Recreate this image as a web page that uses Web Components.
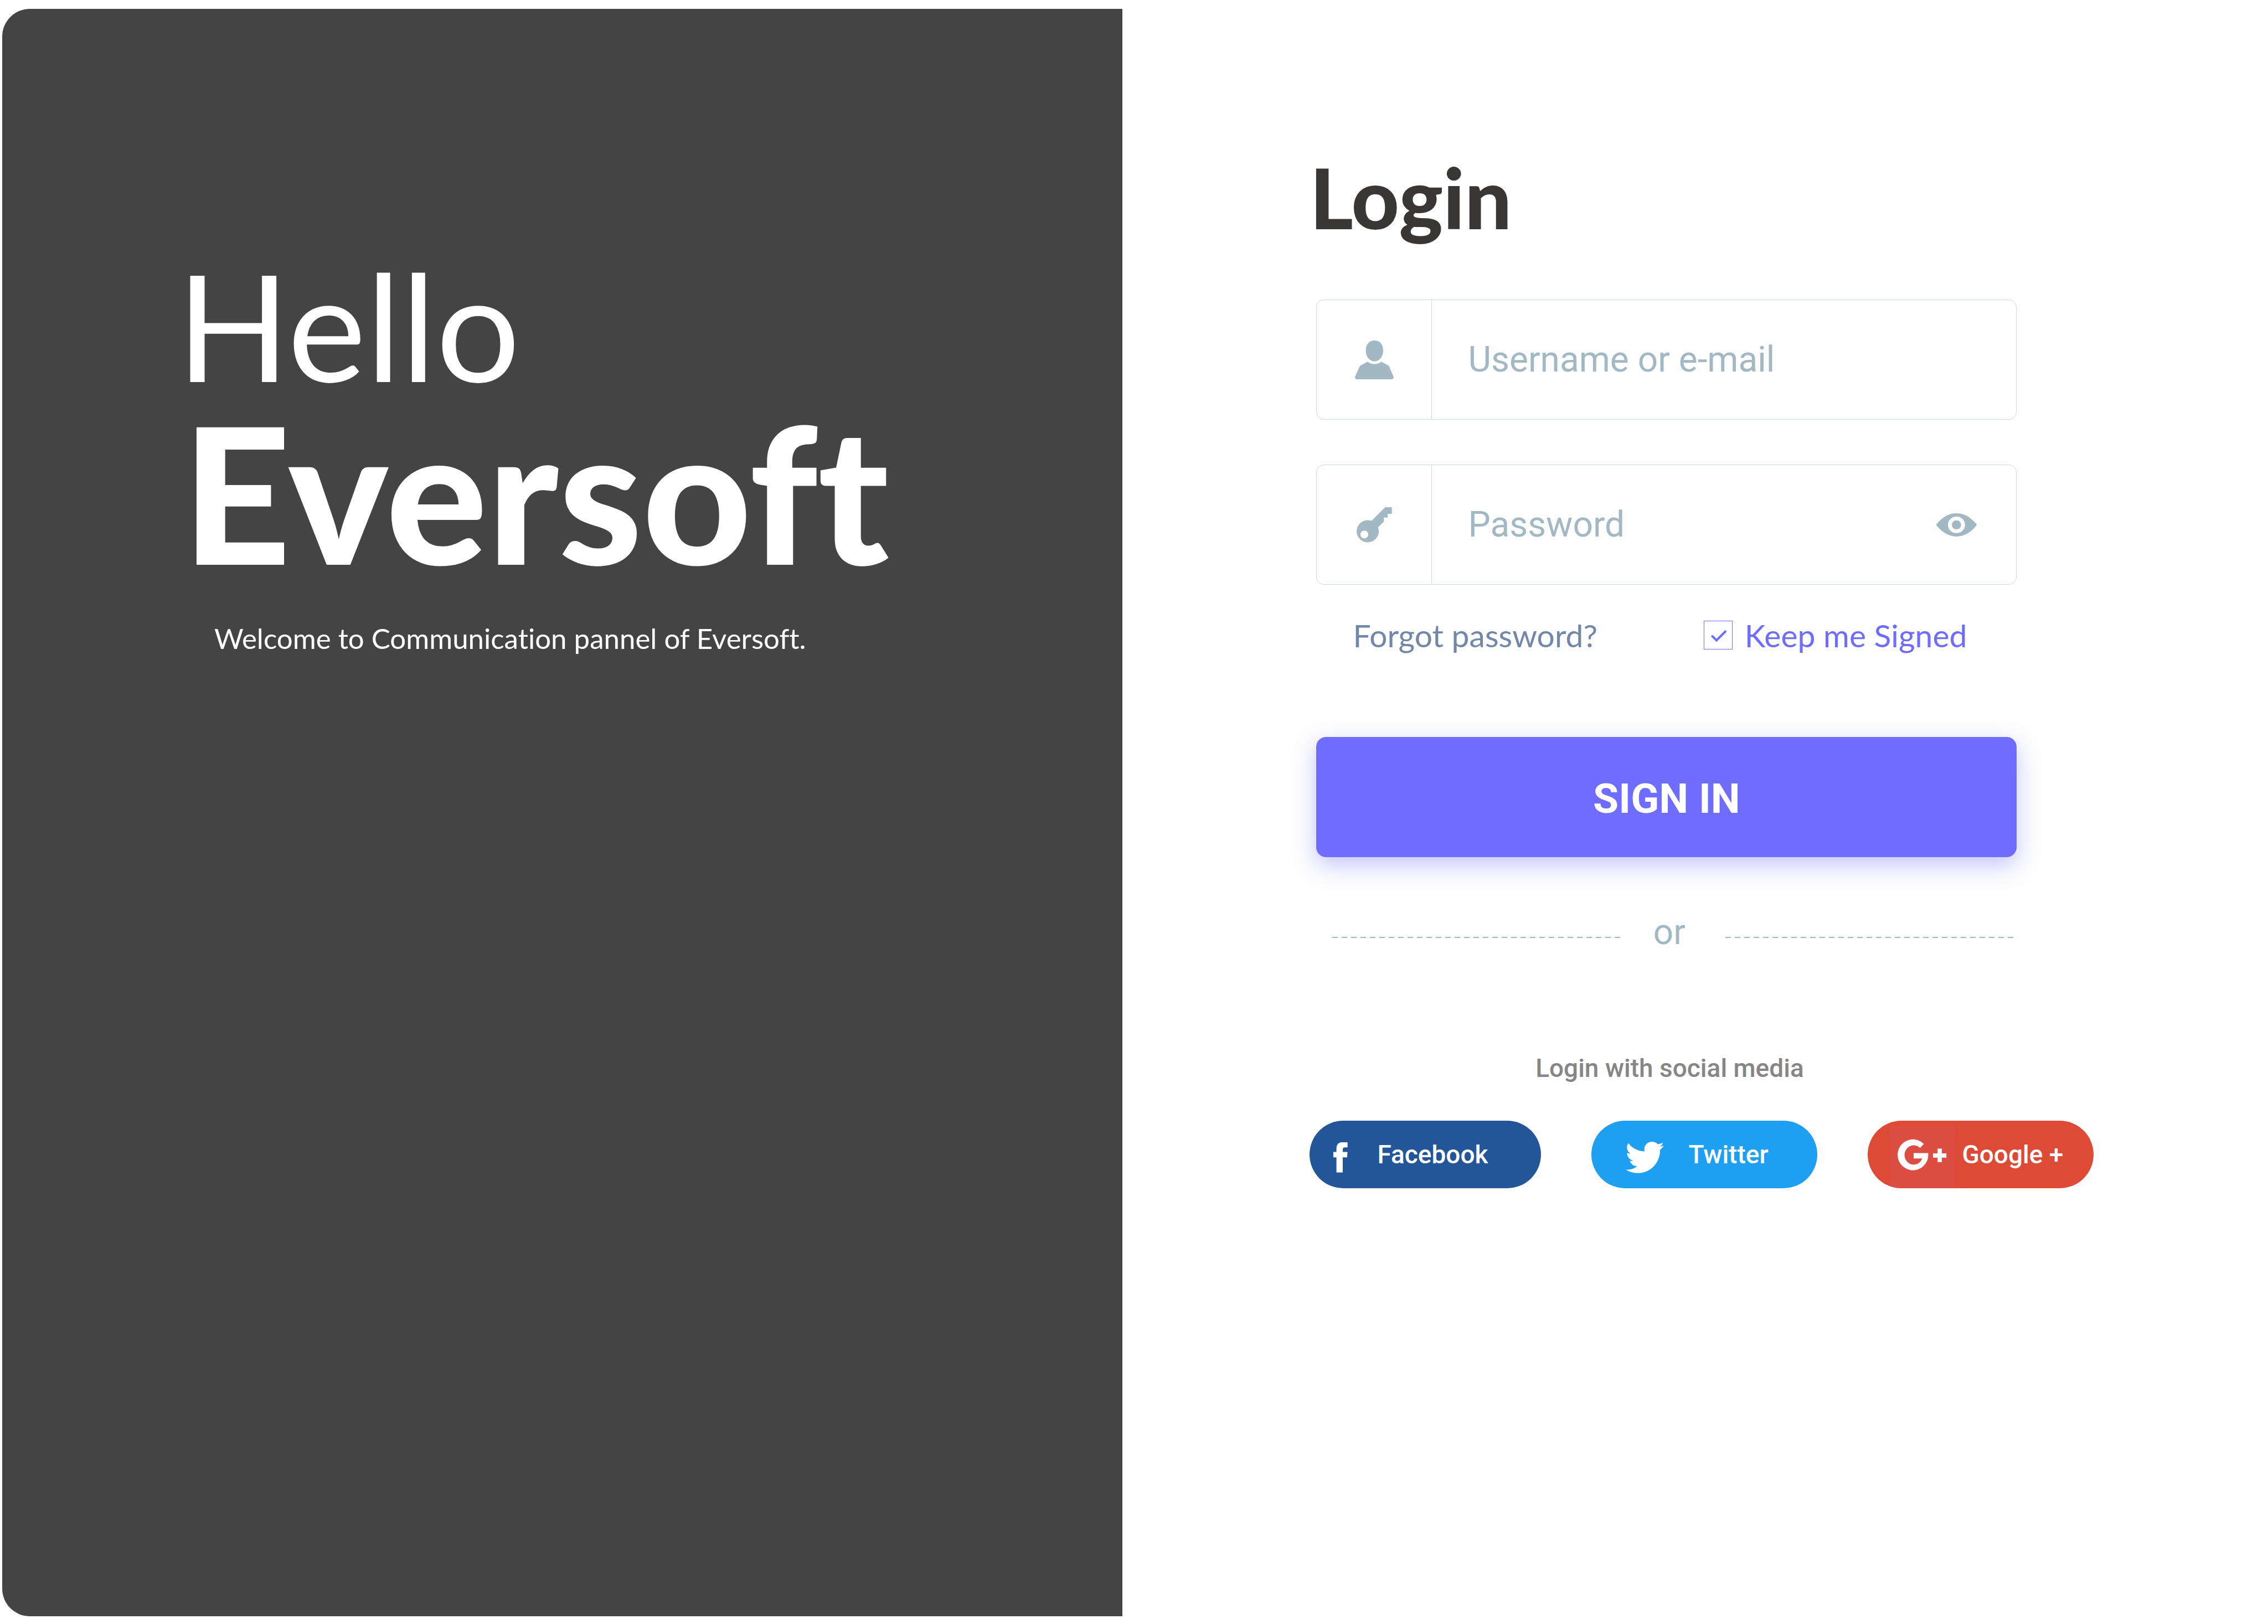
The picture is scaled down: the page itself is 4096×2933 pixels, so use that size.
<!DOCTYPE html>
<html lang="en">
<head>
<meta charset="utf-8">
<title>Eversoft login</title>
<style>
  body { margin: 0; background: #fefefe; }
</style>
</head>
<body>
<login-page>
  <welcome-panel slot="welcome">
    <span slot="greeting">Hello</span>
    <span slot="name">Eversoft</span>
    <span slot="tagline">Welcome to Communication pannel of Eversoft.</span>
  </welcome-panel>
  <login-form slot="form"></login-form>
</login-page>

<script>
const define = (name, html, setup) => {
  const template = document.createElement('template');
  template.innerHTML = html;
  customElements.define(name, class extends HTMLElement {
    connectedCallback() {
      if (this.shadowRoot) return;
      this.attachShadow({ mode: 'open' }).append(template.content.cloneNode(true));
      if (setup) setup(this, this.shadowRoot);
    }
  });
};

const icons = {
  user: `<svg width="70" height="70" viewBox="0 0 70 70" fill="currentColor"><path d="M35.3 0C45 0 51 7 51 18.500C51 29 44 37.600 35.300 37.600C26.500 37.600 19.600 29 19.600 18.500C19.600 7 25.500 0 35.300 0Z"/><path d="M23 38.200L9.800 45.200Q9.200 45.600 8.900 46.200L.5 64.800C-.7 67.500 1 70 3.800 70H66.200C69 70 70.700 67.500 69.500 64.800L61.600 46.200Q61.300 45.600 60.700 45.200L47.700 38.200C40.500 44 30.500 44 23 38.200Z"/></svg>`,
  key: `<svg width="64" height="64" viewBox="0 0 64 64" fill="currentColor"><path fill-rule="evenodd" d="M27 24.700L51.600 0H63.700V12H56.200V18.800H49.100V25.900L38.800 36.400A20 20 0 1 1 27 24.700ZM14 42.200A7.100 7.100 0 1 0 14 56.400A7.100 7.100 0 1 0 14 42.200Z"/></svg>`,
  eye: `<svg width="73" height="42" viewBox="0 0 73 42" fill="currentColor"><path fill-rule="evenodd" d="M.3 19.600C10.500 7.400 22 0 36.400 0S61.500 7 72.500 19.600Q73.200 20.900 72.500 22C61.500 35.500 49.500 41.900 36.400 41.900S10.500 34.800 .3 22Q-.3 20.900 .3 19.600ZM36.400 6A15.400 14.900 0 1 0 36.400 35.800A15.400 14.900 0 1 0 36.400 6Z"/><ellipse cx="36.400" cy="20.900" rx="8.400" ry="8.100"/></svg>`,
  facebook: `<svg width="26" height="122" viewBox="0 0 26 122" fill="#fff"><path d="M25.700 39V48.300H20.700Q17 48.300 17 51.800V56.600H25.600L24.900 66.300H17V93.500H5.600V66.300H0V56.600H5.600V50.500C5.600 43 9.500 39 15.500 39Z"/></svg>`,
  twitter: `<svg width="70" height="122" viewBox="0 0 70 122" fill="#fff"><path d="M4.600 40.600C12 50 22 55 34 55.600C32 46 38 38 47.600 38C51.500 38 55.300 39.500 58 42.500C61.300 41.900 64.500 40.900 67.300 39.400C66.300 42.800 64.400 45.300 61.500 47.100C64.200 46.800 66.800 46.100 69.100 45.100C67.200 47.900 64.900 50.300 62.100 52.400C62.800 73 47 94.600 21.800 94.600C13.800 94.600 6.300 92.300 0 88.400C7.500 89.200 15 87 20.600 82.300C14.300 82.200 9.300 78.100 7.500 72.400C9.600 72.800 11.900 72.700 13.900 72.200C7.200 70.800 2.300 65 2.300 58C4.200 59.100 6.300 59.700 8.600 59.700C2.200 55.300 .4 47.600 4.600 40.600Z"/></svg>`,
  google: `<svg width="118" height="122" viewBox="0 0 118 122" fill="#fff"><path fill="#dc4e41" d="M0 10H118V122H0Z"/><path d="M61.500 42A27.700 27.900 0 1 0 69.300 58.600H43V68.300H58.600A16.600 17.400 0 1 1 54.600 49.300Z"/><path d="M86.200 50.600H94V59H102.200V66.700H94V74.800H86.200V66.700H78V59H86.200Z"/></svg>`
};

define('login-page', `
  <style>
    :host { display: flex; min-height: 100vh; color: #fff; font-variant-ligatures: none;
            --humanist: Lato, "Noto Sans", sans-serif; --plain: Roboto, "Liberation Sans", sans-serif; }
    ::slotted(login-form) { flex: 1; min-width: 0; }
  </style>
  <slot name="welcome"></slot>
  <slot name="form"></slot>`);

define('welcome-panel', `
  <style>
    :host { display: block; box-sizing: border-box; flex: 0 0 49.400%; margin: 16px 0 14px 4px; padding: 428px 80px 80px 315px;
            background: #444; border-radius: 50px 0 0 50px; font-family: var(--humanist); }
    h1, p { margin: 0; font-weight: 400; }
    .greeting { display: block; font-size: 268px; line-height: 284px; }
    .name { display: block; padding-left: 10px; font-size: 342px; line-height: 320px; font-weight: 900; }
    p { margin-top: 75px; padding-left: 68px; font-size: 51px; line-height: 60px; }
  </style>
  <h1><span class="greeting"><slot name="greeting"></slot></span><span class="name"><slot name="name"></slot></span></h1>
  <p><slot name="tagline"></slot></p>`);

define('icon-field', `
  <style>
    :host { display: flex; box-sizing: border-box; height: 217px; border: 1px solid #cddbdf; border-radius: 14px; color: #a2b8c3; }
    label { flex: 0 0 207px; display: grid; place-items: center; border-right: 1px solid #cddbdf; }
    input { flex: 1; min-width: 0; padding: 0 65px; border: 0; outline: 0; background: none; color: inherit; font: 400 64px var(--plain); }
    input::placeholder { color: #a2b8c3; opacity: 1; }
    button { flex: none; padding: 0 71px 0 0; border: 0; background: none; color: inherit; display: grid; place-items: center; }
    svg { display: block; }
  </style>
  <label for="box"></label>
  <input id="box">`, (host, root) => {
  const input = root.querySelector('input');
  const label = root.querySelector('label');
  label.innerHTML = icons[host.getAttribute('icon')];
  label.setAttribute('aria-label', host.getAttribute('hint'));
  input.type = host.getAttribute('type');
  input.placeholder = host.getAttribute('hint');
  input.setAttribute('aria-label', host.getAttribute('hint'));
  if (input.type === 'password') {
    const toggle = document.createElement('button');
    toggle.type = 'button';
    toggle.setAttribute('aria-label', 'Show password');
    toggle.innerHTML = icons.eye;
    toggle.addEventListener('click', () => { input.type = input.type === 'password' ? 'text' : 'password'; });
    root.append(toggle);
  }
});

define('check-option', `
  <style>
    :host { display: block; color: #6f6dff; }
    label { display: flex; align-items: center; gap: 22px; }
    .box { display: grid; }
    .box > * { grid-area: 1 / 1; }
    input { appearance: none; box-sizing: border-box; width: 52px; height: 52px; margin: 0; border: 1px solid #6f6dff; }
    svg { pointer-events: none; visibility: hidden; }
    input:checked + svg { visibility: visible; }
  </style>
  <label><span class="box"><input type="checkbox" checked>
    <svg width="52" height="52" viewBox="0 0 52 52"><path d="M15.500 28L23 35.500L39 19.500" fill="none" stroke="#6f6dff" stroke-width="4" stroke-linecap="round"/></svg></span>
    <slot></slot></label>`);

define('or-divider', `
  <style>
    :host { display: flex; align-items: center; gap: 58px; padding-left: 29px; padding-right: 5px; color: #a2b8c3; font: 400 64px/76px var(--plain); }
    i { flex: 1; height: 2px; margin-top: 18px; background: repeating-linear-gradient(90deg, #a2b8c3 0 10px, transparent 10px 17px); }
    span { padding-right: 14px; }
  </style>
  <i></i><span><slot></slot></span><i></i>`);

define('social-button', `
  <style>
    :host { display: block; }
    button { display: flex; align-items: center; width: 100%; height: 122px; padding: 0 0 0 var(--inset); gap: var(--space); border: 0; border-radius: 61px;
             overflow: hidden; background: var(--brand); color: #fff; font: 500 46px/54px var(--plain); white-space: nowrap; }
    svg { display: block; flex: none; }
  </style>
  <button type="button"><slot></slot></button>`, (host, root) => {
  root.querySelector('button').insertAdjacentHTML('afterbegin', icons[host.getAttribute('brand')]);
});

define('login-form', `
  <style>
    :host { display: block; box-sizing: border-box; padding: 276px 312px 80px 338px; }
    h2 { margin: 0; color: #383735; font: 900 150px/160px var(--humanist); }
    form { display: flex; flex-direction: column; max-width: 1265px; margin: 105px 0 0 12px; }
    icon-field + icon-field { margin-top: 81px; }
    .options { display: flex; justify-content: space-between; align-items: center; margin-top: 59px; padding: 0 90px 0 66px; font: 400 57px/64px var(--humanist); }
    a { color: #7388a9; text-decoration: none; }
    .submit { height: 217px; margin-top: 152px; padding: 4px 0 0; border: 0; border-radius: 18px; background: #6f6dff; color: #fff; font: 700 75px/88px var(--plain);
              box-shadow: 0 14px 40px rgba(111, 109, 255, .4); }
    or-divider { margin-top: 98px; }
    h3 { margin: 180px 0 0 12px; text-align: center; max-width: 1276px; color: #868686; font: 500 46px/54px var(--plain); }
    .social { display: grid; grid-template-columns: 418fr 408fr 408fr; gap: 91px; max-width: 1416px; margin-top: 68px; }
    .facebook { --brand: #225698; --inset: 43px; --space: 53px; }
    .twitter { --brand: #1e9ff2; --inset: 62px; --space: 43px; }
    .google { --brand: #dd4b37; --inset: 40px; --space: 12px; }
  </style>
  <h2>Login</h2>
  <form>
    <icon-field icon="user" type="text" hint="Username or e-mail"></icon-field>
    <icon-field icon="key" type="password" hint="Password"></icon-field>
    <div class="options"><a href="#forgot">Forgot password?</a><check-option>Keep me Signed</check-option></div>
    <button class="submit" type="button">SIGN IN</button>
    <or-divider>or</or-divider>
  </form>
  <h3>Login with social media</h3>
  <div class="social">
    <social-button class="facebook" brand="facebook">Facebook</social-button>
    <social-button class="twitter" brand="twitter">Twitter</social-button>
    <social-button class="google" brand="google">Google +</social-button>
  </div>`);
</script>
</body>
</html>
